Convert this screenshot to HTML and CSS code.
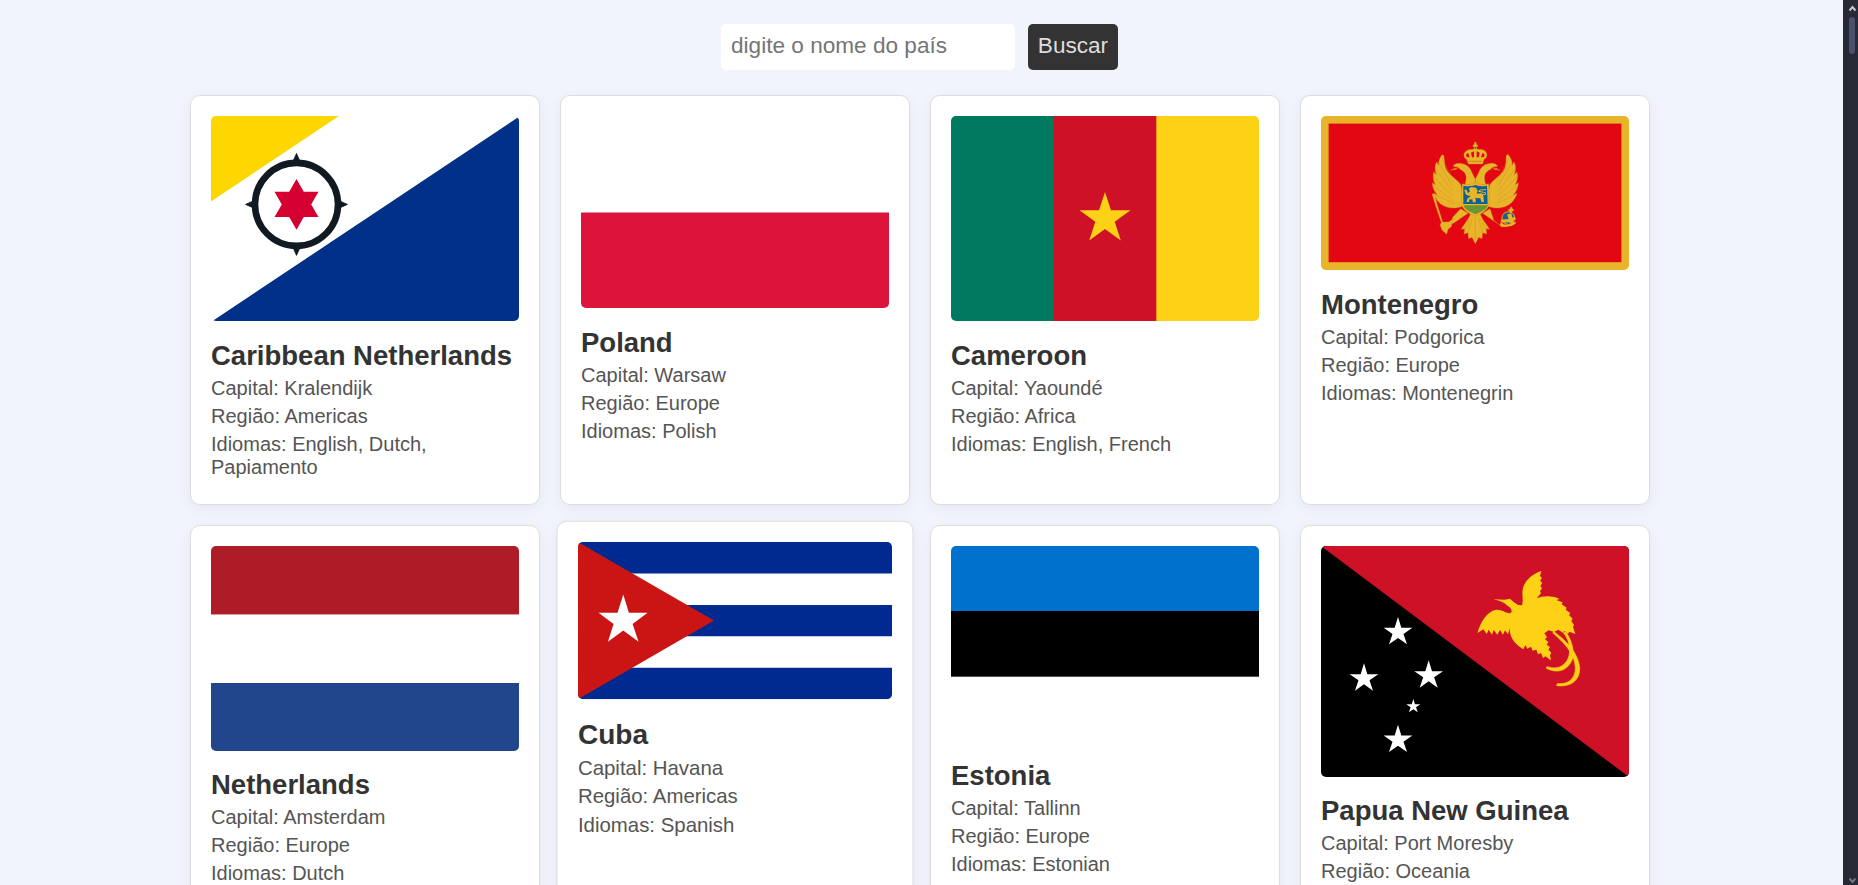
FILE: index.html
```html
<!DOCTYPE html>
<html lang="pt-BR">
<head>
<meta charset="utf-8">
<title>Países</title>
<link rel="stylesheet" href="styles.css">
</head>
<body>
<div class="page">
  <form class="search">
    <input class="search-input" type="text" placeholder="digite o nome do país">
    <button class="search-button" type="button">Buscar</button>
  </form>
  <main class="grid">
    <article class="card">
      <svg class="flag" viewBox="0 0 308 205.33">
        <rect width="308" height="205.33" fill="#fff"/>
        <path d="M0 0H128L0 85.5Z" fill="#ffd700"/>
        <path d="M1 205.33L308 .7V205.33Z" fill="#003087"/>
        <g transform="translate(85.5 88.4)">
          <path d="M0-51L4-42L-4-42ZM0 51L4 42L-4 42ZM-51 0L-42-4L-42 4ZM51 0L42-4L42 4Z" fill="#111a20" stroke="#111a20" stroke-width=".8"/>
          <circle r="41.5" fill="#fff" stroke="#111a20" stroke-width="6.6"/>
          <path d="M0-25.3L7.3-12.7H22L14.7 0L22 12.7H7.3L0 25.3L-7.3 12.7H-22L-14.7 0L-22-12.7H-7.3Z" fill="#d50032"/>
        </g>
      </svg>
      <h2 class="name">Caribbean Netherlands</h2>
      <p class="info">Capital: Kralendijk</p>
      <p class="info">Região: Americas</p>
      <p class="info">Idiomas: English, Dutch, Papiamento</p>
    </article>
    <article class="card">
      <svg class="flag" viewBox="0 0 308 192.4">
        <rect width="308" height="97" fill="#fff"/>
        <rect y="96.5" width="308" height="96.5" fill="#dc143c"/>
      </svg>
      <h2 class="name">Poland</h2>
      <p class="info">Capital: Warsaw</p>
      <p class="info">Região: Europe</p>
      <p class="info">Idiomas: Polish</p>
    </article>
    <article class="card">
      <svg class="flag" viewBox="0 0 308 205.33">
        <rect x="205" width="103" height="205.33" fill="#fcd116"/>
        <rect x="102" width="103.33" height="205.33" fill="#ce1126"/>
        <rect width="102.67" height="205.33" fill="#007a5e"/>
        <path d="M154 76L160 94.3H179.5L163.700 105.700L169.8 124.5L154 113L138.2 124.5L144.3 105.7L128.5 94.3H148Z" fill="#fcd116"/>
      </svg>
      <h2 class="name">Cameroon</h2>
      <p class="info">Capital: Yaoundé</p>
      <p class="info">Região: Africa</p>
      <p class="info">Idiomas: English, French</p>
    </article>
    <article class="card">
      <svg class="flag" viewBox="0 0 308 154">
        <rect width="308" height="154" fill="#e8b42a"/>
        <rect x="7.6" y="7.6" width="292.8" height="138.6" fill="#e30613"/>
        <g transform="translate(79 14) scale(.33333)" fill="#e8b42a" stroke="#cf8a20" stroke-width="1.2">
          <path d="M190 228C165 238 142 236 122 222C112 214 104 202 101 190L112 194C102 184 97 170 97 158L106 164C99 150 98 138 101 126L109 134C104 120 104 106 110 96L116 106C114 94 120 84 126 74L131 76C135 92 132 106 140 120C150 138 178 152 184 168Z"/>
          <path d="M108 118L156 182M102 142L158 198M101 168L160 212M108 195L165 222M116 98L158 168M126 84L160 152" fill="none"/>
          <path d="M160 108C164 100 176 97 190 102C204 106 212 116 216 128L226 148V172H194C196 154 202 144 196 132C190 120 182 122 174 112C168 108 162 112 160 108Z"/>
          <path d="M170 118L152 120M174 114L160 116" fill="none" stroke="#e8b42a" stroke-width="2"/>
          <path d="M262 228C287 238 310 236 330 222C340 214 348 202 351 190L340 194C350 184 355 170 355 158L346 164C353 150 354 138 351 126L343 134C348 120 348 106 342 96L336 106C338 94 332 84 324 73L319 76C317 92 320 106 312 120C302 138 274 152 268 168Z"/>
          <path d="M344 118L296 182M350 142L294 198M351 168L292 212M344 195L287 222M336 98L294 168M326 84L292 152" fill="none"/>
          <path d="M292 108C288 100 276 97 262 102C248 106 240 116 236 128L226 148V172H258C256 154 250 144 256 132C262 120 270 122 278 112C284 108 290 112 292 108Z"/>
          <path d="M282 118L300 120M278 114L292 116" fill="none" stroke="#e8b42a" stroke-width="2"/>
          <!-- tail and legs -->
          <path d="M204 250L166 276L152 284L158 262L182 236ZM248 250L286 276L304 288L330 282L342 276L338 286L306 290L282 272L270 236Z"/>
          <path d="M212 250C206 270 190 284 184 298L194 296L192 312L204 308L206 326L216 322L226 341L236 322L246 326L248 308L260 312L258 296L268 298C262 284 246 270 240 250Z"/>
          <path d="M226 262V330M216 265L204 308M236 265L248 308M208 268L194 298M244 268L258 298" fill="none"/>
          <!-- sceptre -->
          <path d="M96 192L104 192L112 225L128 276L146 276L158 268L154 290L144 298L140 313L126 300L120 284L124 278L106 224Z"/>
          <!-- crown -->
          <path d="M205 102L200 88C190 84 188 68 200 62C208 56 218 60 222 56V50H219V44H223V37H229V44H233V50H230V56C236 60 246 56 254 62C264 70 262 84 252 88L248 102Z"/>
          <path d="M206 94H246" stroke="#a83c14"/>
          <path d="M200 81L198 74L204 68L209 82ZM216 82L213 68L222 64V82ZM230 82V64L239 68L236 82ZM243 82L248 68L254 74L252 81Z" fill="#e30613" stroke="none"/>
          <circle cx="226" cy="53" r="3" fill="#3d7045" stroke="none"/>
          <!-- shield -->
          <path d="M187 161Q210 168 226 158Q242 168 266 161C268 180 268 200 268 224Q260 246 226 259Q192 246 184 224C184 202 184 182 187 161Z"/>
          <path d="M190 167Q210 171 226 165Q242 171 261 167L263 222H190Z" fill="#0b6194" stroke="none"/>
          <path d="M190 226H264Q258 242 226 253Q196 242 190 226Z" fill="#6b9633" stroke="none"/>
          <path d="M193 180L199 178L204 190L210 184L206 176L214 171L228 173L233 182L230 191L245 190L250 196L252 216H244L241 205L226 204L228 217H218L217 208L207 209L208 216H199L203 205L212 199L198 194Z" stroke="none"/>
          <path d="M247 194L257 193L256 188L236 184L240 180L258 179" fill="none" stroke="#e8b42a" stroke-width="3"/>
          <!-- orb -->
          <circle cx="325" cy="264" r="19" fill="#175f85" stroke="#e8b42a" stroke-width="3"/>
          <path d="M303 269Q324 271 344 261L347 268Q327 280 304 277ZM322 253L334 251L340 279H330ZM330 249V242H326V237H331V232H336V237H340V243H335V249Z" stroke="#e8b42a"/>
          <path d="M302 276Q322 296 346 274L347 281Q324 296 300 288Z" stroke="none"/>
        </g>
      </svg>
      <h2 class="name">Montenegro</h2>
      <p class="info">Capital: Podgorica</p>
      <p class="info">Região: Europe</p>
      <p class="info">Idiomas: Montenegrin</p>
    </article>
    <article class="card">
      <svg class="flag" viewBox="0 0 308 205.33">
        <rect y="136.9" width="308" height="68.44" fill="#21468b"/>
        <rect y="68.44" width="308" height="68.44" fill="#fff"/>
        <rect width="308" height="68.44" fill="#ae1c28"/>
      </svg>
      <h2 class="name">Netherlands</h2>
      <p class="info">Capital: Amsterdam</p>
      <p class="info">Região: Europe</p>
      <p class="info">Idiomas: Dutch</p>
    </article>
    <article class="card card-active">
      <svg class="flag" viewBox="0 0 308 154">
        <rect width="308" height="154" fill="#fff"/>
        <path d="M0 0H308V30.8H0ZM0 61.6H308V92.4H0ZM0 123.2H308V154H0Z" fill="#002a8f"/>
        <path d="M0 0L133.4 77L0 154Z" fill="#cb1515"/>
        <path transform="scale(.3268) translate(-84 -111)" d="M220 268L237 323H293L248 357L266 410L220 376L174 410L191 357L146 323H203Z" fill="#fff"/>
      </svg>
      <h2 class="name">Cuba</h2>
      <p class="info">Capital: Havana</p>
      <p class="info">Região: Americas</p>
      <p class="info">Idiomas: Spanish</p>
    </article>
    <article class="card">
      <svg class="flag" viewBox="0 0 308 196">
        <rect y="130.67" width="308" height="65.33" fill="#fff"/>
        <rect y="65" width="308" height="65.67" fill="#000"/>
        <rect width="308" height="65" fill="#0072ce"/>
      </svg>
      <h2 class="name">Estonia</h2>
      <p class="info">Capital: Tallinn</p>
      <p class="info">Região: Europe</p>
      <p class="info">Idiomas: Estonian</p>
    </article>
    <article class="card">
      <svg class="flag" viewBox="0 0 308 231">
        <rect width="308" height="231" fill="#000"/>
        <path d="M0 0H308V231Z" fill="#ce1126"/>
        <g transform="scale(.33333) translate(-33 -48)">
          <defs><path id="star" d="M0-43L10-10.500H43L16.500 8L27 39L0 20L-27 39L-16.500 8L-43-10.500H-10Z"/></defs>
          <g fill="#fff">
            <use href="#star" x="264" y="304"/>
            <use href="#star" x="162" y="443"/>
            <use href="#star" x="356" y="434"/>
            <use href="#star" x="264" y="627"/>
            <use href="#star" transform="translate(310 528) scale(.49)"/>
          </g>
          <path d="M551 208L584 209L600 206L610 215L624 225L636 226C641 210 635 195 638 179C642 155 664 132 694 123L690 138L696 144L690 152L697 159L691 168L696 175L690 184L693 190L680 205C700 197 722 196 748 206L740 211L758 217L755 223L770 233L767 239L781 249L777 256L788 266L784 273L792 285L789 291L796 312L778 305L774 311L764 303L758 308L745 299L732 306L716 301L703 310L711 321L705 328L715 336L710 344L720 351L715 359L724 368L720 376L723 391L706 379L699 384L693 369L684 373L679 359L668 362L663 350L652 356L646 345L640 358C622 346 598 328 599 294L594 313L585 301L579 314L570 300L562 314L551 300L546 314L536 299L530 312L520 298L502 309C512 275 530 245 558 239C575 238 588 249 600 250C610 246 603 233 594 229C583 218 572 213 551 208Z" fill="#fcd116"/>
          <path d="M732 305C790 348 808 385 809 418C808 452 782 472 740 467L742 461C776 464 796 446 796 414C794 378 776 350 728 308ZM768 306C787 333 792 365 789 382C779 416 748 436 708 414L712 410C744 422 770 405 777 377C782 350 776 328 760 308Z" fill="#fcd116" stroke="#fcd116" stroke-width="2"/>
        </g>
      </svg>
      <h2 class="name">Papua New Guinea</h2>
      <p class="info">Capital: Port Moresby</p>
      <p class="info">Região: Oceania</p>
      <p class="info">Idiomas: English, Tok Pisin, Hiri Motu</p>
    </article>
  </main>
</div>
<div class="scrollbar">
  <svg class="arrow" viewBox="0 0 7 7"><path d="M.5 5.500L3.500 2L6.500 5.500" fill="none" stroke="#c8c8c8" stroke-width="2"/></svg>
  <div class="thumb"></div>
  <svg class="arrow arrow-down" viewBox="0 0 7 7"><path d="M.5 1.500L3.500 5L6.500 1.500" fill="none" stroke="#74757a" stroke-width="2"/></svg>
</div>
</body>
</html>
```
FILE: styles.css
```css
* {
  box-sizing: border-box;
  margin: 0;
  padding: 0;
}

body {
  display: flex;
  height: 885px;
  overflow: hidden;
  background: #f1f4fd;
  font-family: "Liberation Sans", Arial, sans-serif;
}

.page {
  flex: 1;
  height: 885px;
  padding: 24px 3px 0 0;
  overflow: hidden;
}

.search {
  display: flex;
  justify-content: center;
  gap: 13px;
  margin-bottom: 25px;
  padding-right: 1px;
}

.search-input,
.search-button {
  height: 46px;
  padding: 0 10px 2px;
  border: none;
  border-radius: 5px;
  font-family: inherit;
  font-size: 22.6px;
}

.search-input {
  width: 294px;
  background: #fff;
}

.search-input::placeholder {
  color: #757575;
}

.search-button {
  width: 90px;
  padding: 0 0 2px;
  background: #333;
  color: #ddd;
}

.grid {
  display: grid;
  grid-template-columns: repeat(4, 350px);
  justify-content: center;
  gap: 19.7px 20px;
}

.card {
  padding: 20px;
  border: 1px solid #ddd;
  border-radius: 10px;
  background: #fff;
  box-shadow: 0 4px 15px rgba(0, 0, 0, 0.05);
}

.card-active {
  transform: scale(1.02);
}

.flag {
  display: block;
  width: 308px;
  margin-bottom: 18.5px;
  border-radius: 5px;
}

.name {
  margin-bottom: 5px;
  color: #333;
  font-size: 27.5px;
  line-height: 32px;
}

.info {
  margin-bottom: 5px;
  color: #555;
  font-size: 20px;
  line-height: 23px;
}

.scrollbar {
  display: flex;
  flex-direction: column;
  align-items: center;
  width: 15px;
  height: 885px;
  padding: 5px 0 1px 3px;
  background: #262a36;
}

.arrow {
  width: 7px;
  height: 7px;
}

.thumb {
  width: 6px;
  height: 37px;
  margin-top: 5px;
  border-radius: 3px;
  background: #4c5069;
}

.arrow-down {
  margin-top: auto;
}
```
